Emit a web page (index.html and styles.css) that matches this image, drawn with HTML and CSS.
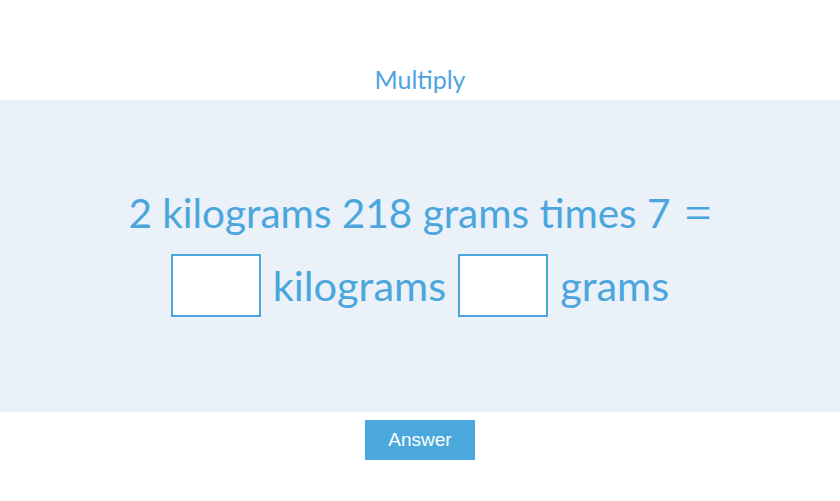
FILE: index.html
```html
<!DOCTYPE html>
<html lang="en">
<head>
    <meta charset="UTF-8">
    <title>Multiply</title>
    <link rel="stylesheet" href="styles.css">
</head>
<body>
    <h1 class="title">Multiply</h1>

    <div class="panel">
        <p class="question first">2 kilograms 218 grams times 7 <span class="eq">=</span></p>
        <p class="question">
            <input class="box" type="text"> kilograms <input class="box" type="text"> grams
        </p>
    </div>

    <div class="actions">
        <button class="answer-btn">Answer</button>
    </div>
</body>
</html>
```

FILE: styles.css
```css
body {
    margin: 0;
    font-family: Lato, "Noto Sans", sans-serif;
    background-color: #fff;
}

.title {
    margin: 0;
    padding-top: 64px;
    height: 36px;
    text-align: center;
    font-size: 25px;
    font-weight: normal;
    color: #4fa3df;
}

.panel {
    background-color: #eaf1f9;
    height: 298px;
    padding-bottom: 14px;
    display: flex;
    flex-direction: column;
    justify-content: center;
    align-items: center;
    gap: 8px;
    color: #4aa6dc;
}

.question {
    margin: 0;
    font-size: 41.5px;
    line-height: 64px;
    display: flex;
    align-items: center;
    gap: 12px;
}

.question.first {
    font-size: 40.5px;
}

.eq {
    font-family: "Liberation Serif", serif;
    font-size: 48px;
    margin-left: 2px;
}

.box {
    width: 86px;
    height: 59px;
    border: 2px solid #4aa6dc;
    padding: 0;
    margin: 0;
    background: #fff;
    box-sizing: content-box;
}

.actions {
    text-align: center;
    padding-top: 8px;
}

.answer-btn {
    background-color: #4aa8dc;
    color: #fff;
    border: none;
    width: 110px;
    height: 40px;
    font-family: "Liberation Sans", Arial, sans-serif;
    font-size: 19px;
    cursor: pointer;
}
```
